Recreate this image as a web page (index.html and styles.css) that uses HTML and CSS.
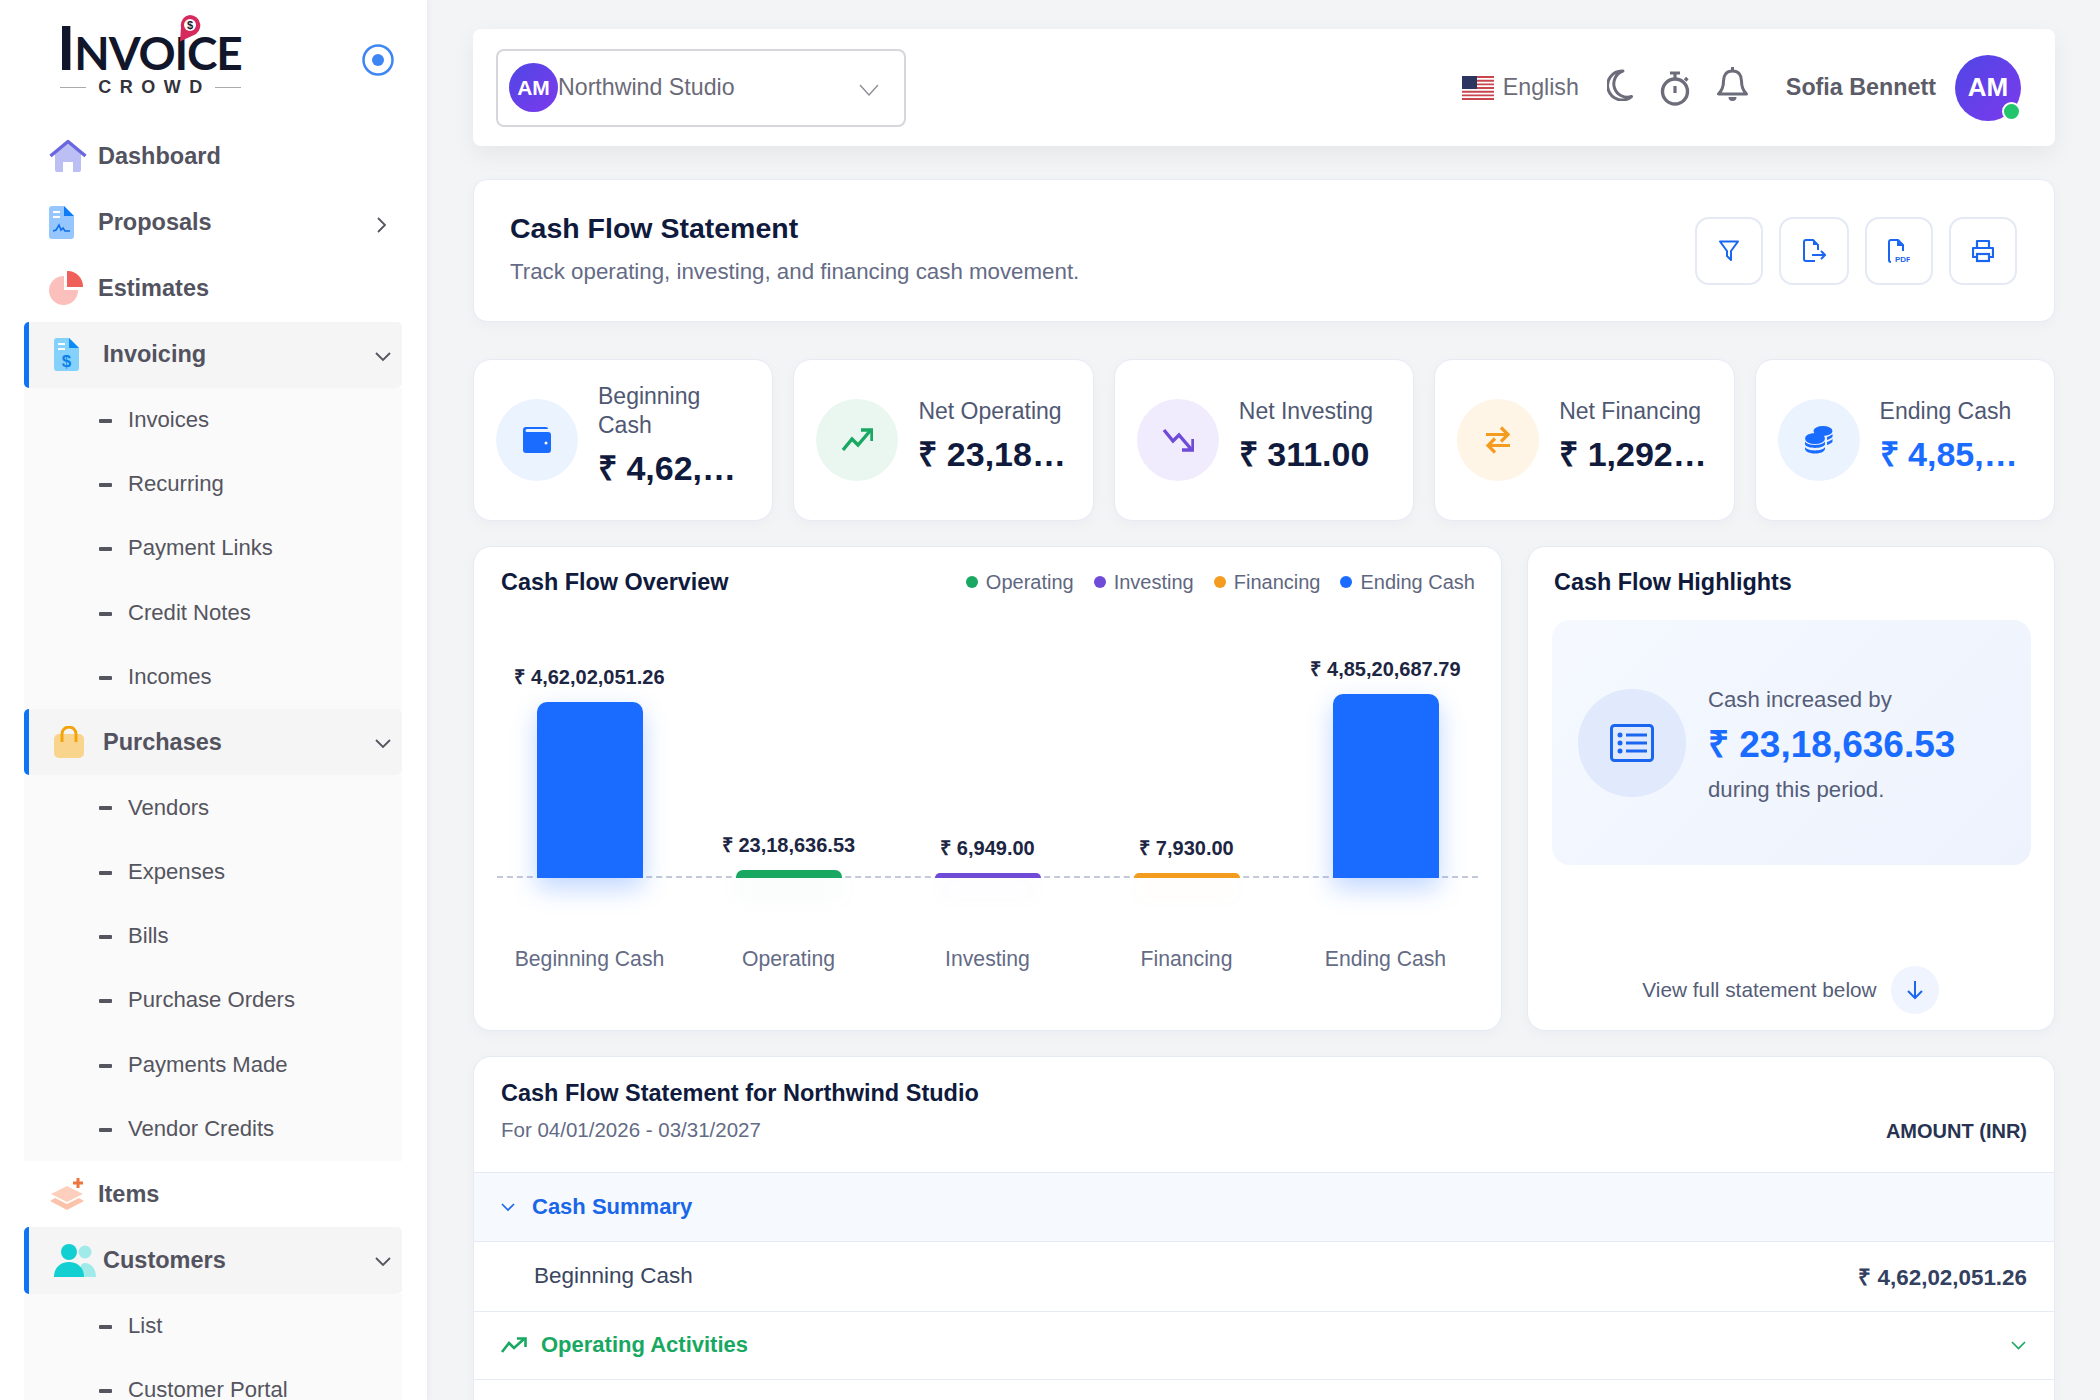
FILE: index.html
```html
<!DOCTYPE html>
<html lang="en">
<head>
    <meta charset="UTF-8">
    <meta name="viewport" content="width=device-width, initial-scale=1.0">
    <title>Cash Flow Statement</title>
    <link rel="stylesheet" href="styles.css">
</head>
<body>
    <div class="app">
        <!-- Sidebar -->
        <aside class="sidebar">
            <div class="brand">
                <div class="logo">
                    <div class="logo-word"><span class="logo-big">I</span>NVOICE</div>
                    <div class="logo-sub"><span class="logo-line"></span><span class="logo-crowd">CROWD</span><span class="logo-line"></span></div>
                    <svg class="logo-pin" viewBox="0 0 24 28" width="24" height="28">
                        <path d="M13 1a10.500 10.500 0 0 1 3 20.500L3 27.500l1-14A10.500 10.500 0 0 1 13 1z" fill="#d62a5e"/>
                        <circle cx="13" cy="11" r="6" fill="#fff"/>
                        <text x="13" y="15" text-anchor="middle" font-size="11" font-weight="700" fill="#1a1a2a" font-family="Liberation Sans">$</text>
                    </svg>
                </div>
                <svg class="brand-toggle" viewBox="0 0 32 32" width="32" height="32">
                    <circle cx="16" cy="16" r="14.500" fill="none" stroke="#3f86f5" stroke-width="2.500"/>
                    <circle cx="16" cy="16" r="6" fill="#3f86f5"/>
                </svg>
            </div>

            <nav class="nav">
                <div class="nav-item">
                    <span class="nav-icon">
                        <svg viewBox="0 0 38 34" width="38" height="34">
                            <path d="M6 14L19 4l13 10v17a2 2 0 0 1-2 2h-6V23H14v10H8a2 2 0 0 1-2-2z" fill="#bcbff4"/>
                            <path d="M1.500 17L19 2.500 36.500 17" fill="none" stroke="#6a68de" stroke-width="3.500" stroke-linejoin="round"/>
                        </svg>
                    </span>
                    <span class="nav-text">Dashboard</span>
                </div>
                <div class="nav-item">
                    <span class="nav-icon">
                        <svg viewBox="0 0 25 33" width="25" height="33">
                            <path d="M3 0h12l10 10v20a3 3 0 0 1-3 3H3a3 3 0 0 1-3-3V3a3 3 0 0 1 3-3z" fill="#95c6fd"/>
                            <path d="M15 0l10 10H15z" fill="#0d7bf5"/>
                            <path d="M4 6h7M4 11h7" stroke="#fff" stroke-width="2"/>
                            <path d="M4 25l3-1 3-5 2 5 2-2 2 3 5 0" fill="none" stroke="#0d6fe8" stroke-width="1.600"/>
                        </svg>
                    </span>
                    <span class="nav-text">Proposals</span>
                    <svg class="nav-arrow arrow-right" viewBox="0 0 10 16" width="10" height="16"><path d="M1 1l7 7-7 7" fill="none" stroke="#55555f" stroke-width="1.800"/></svg>
                </div>
                <div class="nav-item">
                    <span class="nav-icon">
                        <svg viewBox="0 0 34 34" width="34" height="34">
                            <path d="M15 5v14h14a14.500 14.500 0 1 1-14-14z" fill="#fbc0bb"/>
                            <path d="M18 0a15.500 15.500 0 0 1 16 16H18z" fill="#f0605a"/>
                        </svg>
                    </span>
                    <span class="nav-text">Estimates</span>
                </div>

                <div class="nav-item active">
                    <span class="nav-icon">
                        <svg viewBox="0 0 25 33" width="25" height="33">
                            <path d="M3 0h12l10 10v20a3 3 0 0 1-3 3H3a3 3 0 0 1-3-3V3a3 3 0 0 1 3-3z" fill="#84d2fb"/>
                            <path d="M15 0l10 10H15z" fill="#0d8bf5"/>
                            <path d="M4 6h7M4 11h7" stroke="#fff" stroke-width="2"/>
                            <text x="12.500" y="29" text-anchor="middle" font-size="17" fill="#0d7fe8" font-family="Liberation Sans">$</text>
                        </svg>
                    </span>
                    <span class="nav-text">Invoicing</span>
                    <svg class="nav-arrow" viewBox="0 0 16 10" width="16" height="10"><path d="M1 1l7 7 7-7" fill="none" stroke="#55555f" stroke-width="1.800"/></svg>
                </div>
                <div class="sub-list">
                    <div class="sub-item">Invoices</div>
                    <div class="sub-item">Recurring</div>
                    <div class="sub-item">Payment Links</div>
                    <div class="sub-item">Credit Notes</div>
                    <div class="sub-item">Incomes</div>
                </div>

                <div class="nav-item active">
                    <span class="nav-icon">
                        <svg viewBox="0 0 30 32" width="30" height="32">
                            <rect x="0" y="8" width="30" height="24" rx="5" fill="#f9d48c"/>
                            <path d="M8 16V8a7 7 0 0 1 14 0v8" fill="none" stroke="#f5a30b" stroke-width="3"/>
                        </svg>
                    </span>
                    <span class="nav-text">Purchases</span>
                    <svg class="nav-arrow" viewBox="0 0 16 10" width="16" height="10"><path d="M1 1l7 7 7-7" fill="none" stroke="#55555f" stroke-width="1.800"/></svg>
                </div>
                <div class="sub-list">
                    <div class="sub-item">Vendors</div>
                    <div class="sub-item">Expenses</div>
                    <div class="sub-item">Bills</div>
                    <div class="sub-item">Purchase Orders</div>
                    <div class="sub-item">Payments Made</div>
                    <div class="sub-item">Vendor Credits</div>
                </div>

                <div class="nav-item">
                    <span class="nav-icon">
                        <svg viewBox="0 0 36 34" width="36" height="34">
                            <path d="M18 9l16 8-16 8-16-8z" fill="#fdcfbc"/>
                            <path d="M6 21l12 6 12-6 5 3-17 9-17-9z" fill="#fcc3ab"/>
                            <path d="M29 1v10M24 6h10" stroke="#f0743e" stroke-width="3"/>
                        </svg>
                    </span>
                    <span class="nav-text">Items</span>
                </div>

                <div class="nav-item active">
                    <span class="nav-icon">
                        <svg viewBox="0 0 42 34" width="42" height="34">
                            <circle cx="31" cy="9" r="6.500" fill="#a0eaea"/>
                            <path d="M26 34c0-8 0-13 4-14 6-1 12 5 12 14z" fill="#a0eaea"/>
                            <circle cx="15" cy="9" r="8" fill="#12cfd1"/>
                            <path d="M0 34c0-9 6-15 15-15s15 6 15 15z" fill="#12cfd1"/>
                        </svg>
                    </span>
                    <span class="nav-text">Customers</span>
                    <svg class="nav-arrow" viewBox="0 0 16 10" width="16" height="10"><path d="M1 1l7 7 7-7" fill="none" stroke="#55555f" stroke-width="1.800"/></svg>
                </div>
                <div class="sub-list">
                    <div class="sub-item">List</div>
                    <div class="sub-item">Customer Portal</div>
                </div>
            </nav>
        </aside>

        <!-- Main content -->
        <main class="main">
            <header class="topbar">
                <div class="company-select">
                    <span class="avatar avatar-small">AM</span>
                    <span class="company-name">Northwind Studio</span>
                    <svg class="company-arrow" viewBox="0 0 20 12" width="20" height="12"><path d="M1 1l9 10 9-10" fill="none" stroke="#8a8a94" stroke-width="1.300"/></svg>
                </div>
                <div class="topbar-right">
                    <svg class="flag" viewBox="0 0 32 24" width="32" height="24">
                        <rect width="32" height="24" fill="#fff"/>
                        <path d="M0 1h32M0 4.700h32M0 8.400h32M0 12h32M0 15.700h32M0 19.400h32M0 23h32" stroke="#c8474f" stroke-width="1.900"/>
                        <rect width="15" height="13" fill="#2c3560"/>
                    </svg>
                    <span class="lang">English</span>
                    <svg class="top-icon moon" viewBox="0 0 26 32" width="26" height="32"><path d="M24.500 27.500A14.500 14.500 0 1 1 16 2 A13 13 0 0 0 24.500 27.500z" fill="none" stroke="#6c6c7a" stroke-width="3" stroke-linejoin="round"/></svg>
                    <svg class="top-icon timer" viewBox="0 0 30 35" width="30" height="35">
                        <circle cx="15" cy="20.500" r="12.500" fill="none" stroke="#6c6c7a" stroke-width="3.400"/>
                        <path d="M15 15v7M10 2h10M15 2v6M25 7l2.500 2.500" fill="none" stroke="#6c6c7a" stroke-width="3.200"/>
                    </svg>
                    <svg class="top-icon bell" viewBox="0 0 31 36" width="31" height="36">
                        <path d="M15.500 4c-6 0-9 4-9 10 0 7-2 10-5 13h28c-3-3-5-6-5-13 0-6-3-10-9-10z" fill="none" stroke="#6c6c7a" stroke-width="3" stroke-linejoin="round"/>
                        <path d="M15.500 0v4" stroke="#6c6c7a" stroke-width="3"/>
                        <path d="M11.500 30a4 4 0 0 0 8 0z" fill="#6c6c7a"/>
                    </svg>
                    <span class="user-name">Sofia Bennett</span>
                    <span class="avatar avatar-large">AM<span class="online-dot"></span></span>
                </div>
            </header>

            <section class="card page-head">
                <div class="head-text">
                    <h1>Cash Flow Statement</h1>
                    <p>Track operating, investing, and financing cash movement.</p>
                </div>
                <div class="head-actions">
                    <button class="icon-btn">
                        <svg viewBox="0 0 20 22" width="20" height="22"><path d="M1 1.500h18L12 11v9l-4-4v-5z" fill="none" stroke="#1a66f0" stroke-width="2" stroke-linejoin="round"/></svg>
                    </button>
                    <button class="icon-btn icon-btn-wide">
                        <svg viewBox="0 0 24 24" width="24" height="24"><path d="M13 22H4a2 2 0 0 1-2-2V3a2 2 0 0 1 2-2h7l5 5v5" fill="none" stroke="#1a66f0" stroke-width="2" stroke-linejoin="round"/><path d="M11 1v5h5" fill="#1a66f0"/><path d="M10 16h13M19 12l4 4-4 4" fill="none" stroke="#1a66f0" stroke-width="2"/></svg>
                    </button>
                    <button class="icon-btn">
                        <svg viewBox="0 0 22 24" width="22" height="24"><path d="M3 23a2 2 0 0 1-2-2V3a2 2 0 0 1 2-2h7l5 5v6" fill="none" stroke="#1a66f0" stroke-width="2" stroke-linejoin="round"/><path d="M9 1v6h6" fill="#1a66f0"/><text x="7" y="23" font-size="8" font-weight="700" fill="#1a66f0" font-family="Liberation Sans">PDF</text></svg>
                    </button>
                    <button class="icon-btn">
                        <svg viewBox="0 0 22 24" width="22" height="24"><path d="M5 8V2h12v6M5 18H1V9h20v9h-4" fill="none" stroke="#1a66f0" stroke-width="2.200" stroke-linejoin="round"/><rect x="5" y="15" width="12" height="7" fill="none" stroke="#1a66f0" stroke-width="2.200"/></svg>
                    </button>
                </div>
            </section>

            <section class="kpi-row">
                <div class="card kpi">
                    <span class="kpi-icon bg-blue">
                        <svg viewBox="0 0 28 26" width="28" height="26"><path d="M3 0h20a2 2 0 0 1 2 2H4a1.500 1.500 0 0 0 0 3h21a3 3 0 0 1 3 3v15a3 3 0 0 1-3 3H3a3 3 0 0 1-3-3V3a3 3 0 0 1 3-3z" fill="#1a6bff"/><circle cx="23" cy="16" r="1.500" fill="#fff"/></svg>
                    </span>
                    <div class="kpi-body">
                        <div class="kpi-label">Beginning Cash</div>
                        <div class="kpi-value">₹ 4,62,02,051.26</div>
                    </div>
                </div>
                <div class="card kpi">
                    <span class="kpi-icon bg-green">
                        <svg viewBox="0 0 32 24" width="32" height="24"><path d="M2 22l9-11 6 6L29 3" fill="none" stroke="#18a862" stroke-width="3.400"/><path d="M20 2h11v11" fill="none" stroke="#18a862" stroke-width="3.400"/></svg>
                    </span>
                    <div class="kpi-body">
                        <div class="kpi-label">Net Operating</div>
                        <div class="kpi-value">₹ 23,18,636.53</div>
                    </div>
                </div>
                <div class="card kpi">
                    <span class="kpi-icon bg-purple">
                        <svg viewBox="0 0 32 24" width="32" height="24"><path d="M2 2l9 11 6-6 12 14" fill="none" stroke="#6f4bd8" stroke-width="3.400"/><path d="M31 11v11H20" fill="none" stroke="#6f4bd8" stroke-width="3.400"/></svg>
                    </span>
                    <div class="kpi-body">
                        <div class="kpi-label">Net Investing</div>
                        <div class="kpi-value">₹ 311.00</div>
                    </div>
                </div>
                <div class="card kpi">
                    <span class="kpi-icon bg-orange">
                        <svg viewBox="0 0 26 28" width="26" height="28"><path d="M1 8.500h22M16 1.500l7 7-7 7" fill="none" stroke="#f39c1f" stroke-width="3.200"/><path d="M25 19.500H3M10 12.500l-7 7 7 7" fill="none" stroke="#f39c1f" stroke-width="3.200"/></svg>
                    </span>
                    <div class="kpi-body">
                        <div class="kpi-label">Net Financing</div>
                        <div class="kpi-value">₹ 1,292,419.00</div>
                    </div>
                </div>
                <div class="card kpi">
                    <span class="kpi-icon bg-blue">
                        <svg viewBox="0 0 28 28" width="28" height="28">
                            <ellipse cx="18" cy="5" rx="9.500" ry="5" fill="#1a6bff"/>
                            <path d="M22 11c2-.6 4-1.600 5.500-3v3c-1.500 1.400-3.500 2.500-5.500 3zM22 16c2-.6 4-1.600 5.500-3v3c-1.500 1.400-3.500 2.500-5.500 3z" fill="#1a6bff"/>
                            <ellipse cx="10" cy="12.500" rx="10" ry="5.500" fill="#1a6bff"/>
                            <path d="M0 15.500c2 4.500 18 4.500 20 0v3c-2 4.500-18 4.500-20 0zM0 21c2 4.500 18 4.500 20 0v2c-1 6-19 6-20 0z" fill="#1a6bff"/>
                        </svg>
                    </span>
                    <div class="kpi-body">
                        <div class="kpi-label">Ending Cash</div>
                        <div class="kpi-value text-blue">₹ 4,85,20,687.79</div>
                    </div>
                </div>
            </section>

            <section class="chart-row">
                <div class="card overview">
                    <div class="overview-head">
                        <h2>Cash Flow Overview</h2>
                        <div class="legend">
                            <span class="legend-item"><i class="dot green"></i>Operating</span>
                            <span class="legend-item"><i class="dot purple"></i>Investing</span>
                            <span class="legend-item"><i class="dot orange"></i>Financing</span>
                            <span class="legend-item"><i class="dot blue"></i>Ending Cash</span>
                        </div>
                    </div>
                    <div class="plot">
                        <div class="baseline"></div>
                        <div class="plot-col"><span class="bar-value">₹ 4,62,02,051.26</span><div class="bar blue tall" style="height: 176px"></div></div>
                        <div class="plot-col"><span class="bar-value">₹ 23,18,636.53</span><div class="bar green short" style="height: 8px"></div></div>
                        <div class="plot-col"><span class="bar-value">₹ 6,949.00</span><div class="bar purple short" style="height: 5px"></div></div>
                        <div class="plot-col"><span class="bar-value">₹ 7,930.00</span><div class="bar orange short" style="height: 5px"></div></div>
                        <div class="plot-col"><span class="bar-value">₹ 4,85,20,687.79</span><div class="bar blue tall" style="height: 184px"></div></div>
                    </div>
                    <div class="plot-labels">
                        <span>Beginning Cash</span>
                        <span>Operating</span>
                        <span>Investing</span>
                        <span>Financing</span>
                        <span>Ending Cash</span>
                    </div>
                </div>

                <div class="card highlights">
                    <h2>Cash Flow Highlights</h2>
                    <div class="highlight-panel">
                        <span class="highlight-icon">
                            <svg viewBox="0 0 44 38" width="44" height="38"><rect x="1.500" y="1.500" width="41" height="35" rx="3" fill="none" stroke="#1a66f0" stroke-width="3"/><circle cx="10" cy="11" r="2.500" fill="#1a66f0"/><circle cx="10" cy="19" r="2.500" fill="#1a66f0"/><circle cx="10" cy="27" r="2.500" fill="#1a66f0"/><path d="M16 11h21M16 19h21M16 27h21" stroke="#1a66f0" stroke-width="3"/></svg>
                        </span>
                        <div class="highlight-body">
                            <div class="highlight-text">Cash increased by</div>
                            <div class="highlight-value">₹ 23,18,636.53</div>
                            <div class="highlight-text">during this period.</div>
                        </div>
                    </div>
                    <div class="highlight-foot">
                        <span>View full statement below</span>
                        <span class="down-btn">
                            <svg viewBox="0 0 18 20" width="18" height="20"><path d="M9 1v17M2 11l7 7 7-7" fill="none" stroke="#1a66f0" stroke-width="2"/></svg>
                        </span>
                    </div>
                </div>
            </section>

            <section class="card statement">
                <div class="statement-head">
                    <div>
                        <h3>Cash Flow Statement for Northwind Studio</h3>
                        <p>For 04/01/2026 - 03/31/2027</p>
                    </div>
                    <span class="amount-head">AMOUNT (INR)</span>
                </div>
                <div class="st-row st-summary">
                    <svg viewBox="0 0 14 9" width="14" height="9"><path d="M1 1l6 6 6-6" fill="none" stroke="#1a66f0" stroke-width="1.600"/></svg>
                    <span>Cash Summary</span>
                </div>
                <div class="st-row st-line">
                    <span>Beginning Cash</span>
                    <span class="st-amount">₹ 4,62,02,051.26</span>
                </div>
                <div class="st-row st-operating">
                    <svg viewBox="0 0 26 16" width="26" height="16"><path d="M1 15l7-9 5 5 10-9" fill="none" stroke="#18a862" stroke-width="2.600"/><path d="M16 1.500h8.500V10" fill="none" stroke="#18a862" stroke-width="2.600"/></svg>
                    <span>Operating Activities</span>
                    <svg class="st-arrow" viewBox="0 0 15 9" width="15" height="9"><path d="M1 1l6.500 6.500L14 1" fill="none" stroke="#18a862" stroke-width="1.600"/></svg>
                </div>
            </section>
        </main>
    </div>
</body>
</html>
```

FILE: styles.css
```css
* {
    box-sizing: border-box;
    margin: 0;
    padding: 0;
}

html, body {
    height: 1400px;
    overflow: hidden;
}

body {
    font-family: "Liberation Sans", Arial, sans-serif;
    background-color: #f3f4f6;
    color: #0f1a3c;
}

.app {
    display: flex;
    height: 1400px;
    overflow: hidden;
}

/* Sidebar */
.sidebar {
    width: 427px;
    flex-shrink: 0;
    background-color: #fff;
    box-shadow: 2px 0 4px rgba(0, 0, 0, 0.04);
    overflow: hidden;
}

.brand {
    display: flex;
    align-items: flex-start;
    justify-content: space-between;
    height: 123px;
    padding: 24px 33px 0 57px;
}

.brand-toggle {
    margin-top: 20px;
}

.logo {
    position: relative;
    width: 184px;
}

.logo-word {
    font-family: Lato, "Liberation Sans", sans-serif;
    font-weight: 700;
    font-size: 46px;
    line-height: 44px;
    letter-spacing: -1.100px;
    color: #11162b;
    white-space: nowrap;
}

.logo-big {
    font-size: 62px;
}

.logo-sub {
    display: flex;
    align-items: center;
    justify-content: space-between;
    margin: 3px 0 0 3px;
}

.logo-line {
    width: 26px;
    height: 1px;
    background-color: #aaa;
}

.logo-crowd {
    font-size: 18px;
    line-height: 18px;
    font-weight: 700;
    letter-spacing: 8.500px;
    margin-right: -8px;
    color: #33333b;
}

.logo-pin {
    position: absolute;
    top: -10px;
    left: 120px;
}

.nav-item {
    display: flex;
    align-items: center;
    height: 66.200px;
    margin: 0 25px 0 24px;
    padding-left: 20px;
    border-left: 5px solid transparent;
    border-radius: 5px;
    color: #53535f;
    font-size: 23.500px;
    font-weight: 700;
}

.nav-item.active {
    padding-left: 25px;
    border-left-color: #0d74f5;
    background-color: #f5f5f6;
}

.nav-icon {
    display: flex;
    align-items: center;
    width: 49px;
    flex-shrink: 0;
}

.nav-arrow {
    margin-left: auto;
    margin-right: 11px;
    margin-top: 4px;
}

.arrow-right {
    margin-right: 15px;
    margin-top: 6px;
}

.sub-list {
    margin: 0 25px 0 24px;
    background-color: #fafafa;
}

.sub-item {
    display: flex;
    align-items: center;
    height: 64.300px;
    padding-left: 104px;
    font-size: 22.100px;
    color: #55555f;
    position: relative;
}

.sub-item::before {
    content: "";
    position: absolute;
    left: 75px;
    top: 31px;
    width: 13px;
    height: 4px;
    border-radius: 1px;
    background-color: #55555f;
}

/* Main area */
.main {
    flex: 1;
    min-width: 0;
    padding: 29px 45px 0 46px;
}

.card {
    background-color: #fff;
    border: 1px solid #e6eaf4;
    border-radius: 14px;
    box-shadow: 0 4px 14px rgba(15, 26, 60, 0.03);
}

.topbar {
    display: flex;
    align-items: center;
    justify-content: space-between;
    height: 117px;
    padding: 0 34px 0 23px;
    background-color: #fff;
    border-radius: 8px;
    box-shadow: 0 8px 24px rgba(0, 0, 0, 0.06);
    margin-bottom: 33px;
}

.company-select {
    display: flex;
    align-items: center;
    width: 410px;
    height: 78px;
    padding: 0 25px 0 11px;
    border: 2px solid #d6d7dc;
    border-radius: 8px;
}

.avatar {
    display: flex;
    align-items: center;
    justify-content: center;
    flex-shrink: 0;
    border-radius: 50%;
    background: linear-gradient(135deg, #4f46e5, #7c3aed);
    color: #fff;
    font-weight: 700;
}

.avatar-small {
    width: 49px;
    height: 49px;
    font-size: 21px;
}

.avatar-large {
    position: relative;
    width: 66px;
    height: 66px;
    font-size: 26px;
}

.online-dot {
    position: absolute;
    right: 0;
    bottom: 0;
    width: 19px;
    height: 19px;
    border-radius: 50%;
    background-color: #22c56b;
    border: 2px solid #fff;
}

.company-name {
    font-size: 23.200px;
    color: #6b6b78;
}

.company-arrow {
    margin-left: auto;
    margin-top: 4px;
}

.topbar-right {
    display: flex;
    align-items: center;
}

.flag {
    margin-right: 9px;
}

.lang {
    font-size: 23.200px;
    color: #6b6b78;
    margin-right: 28px;
}

.top-icon {
    margin-right: 27px;
}

.moon {
    margin-top: -6px;
}

.timer {
    margin-top: 2px;
}

.bell {
    margin-right: 38px;
    margin-top: -6px;
}

.user-name {
    font-size: 23.300px;
    font-weight: 700;
    color: #5c5c68;
    margin-right: 19px;
}

.page-head {
    display: flex;
    align-items: center;
    justify-content: space-between;
    height: 143px;
    padding: 0 37px 0 36px;
    margin-bottom: 37px;
}

.head-text {
    padding-bottom: 4px;
}

.page-head h1 {
    font-size: 28.500px;
    line-height: 34px;
    color: #0f1a3c;
    margin-bottom: 12px;
}

.page-head p {
    font-size: 22.300px;
    line-height: 30px;
    color: #646b85;
}

.head-actions {
    display: flex;
    gap: 16px;
}

.icon-btn {
    display: flex;
    align-items: center;
    justify-content: center;
    width: 68px;
    height: 68px;
    background-color: #fff;
    border: 2px solid #e4e9f5;
    border-radius: 14px;
}

.icon-btn-wide {
    width: 70px;
}

/* KPI cards */
.kpi-row {
    display: grid;
    grid-template-columns: repeat(5, minmax(0, 1fr));
    gap: 20px;
    margin-bottom: 25px;
}

.kpi {
    display: flex;
    align-items: center;
    gap: 20px;
    height: 162px;
    padding: 0 21px 0 22px;
    border-radius: 18px;
}

.kpi-icon {
    display: flex;
    align-items: center;
    justify-content: center;
    width: 82px;
    height: 82px;
    flex-shrink: 0;
    border-radius: 50%;
}

.bg-blue { background-color: #ebf3ff; }
.bg-green { background-color: #e9f7f0; }
.bg-purple { background-color: #f1ecfd; }
.bg-orange { background-color: #fef5e7; }

.kpi-body {
    min-width: 0;
    flex: 1;
    padding-bottom: 10px;
}

.kpi-label {
    font-size: 23px;
    line-height: 29px;
    color: #4f5873;
    margin-bottom: 8px;
}

.kpi-value {
    font-size: 34px;
    line-height: 40px;
    font-weight: 700;
    color: #0f1a3c;
    white-space: nowrap;
    overflow: hidden;
    text-overflow: ellipsis;
}

.text-blue {
    color: #1a6bff;
}

/* Chart row */
.chart-row {
    display: grid;
    grid-template-columns: 1029px minmax(0, 1fr);
    gap: 25px;
    margin-bottom: 25px;
}

.overview {
    height: 485px;
    border-radius: 18px;
    padding: 22px 16px 0;
}

.overview-head {
    display: flex;
    align-items: center;
    justify-content: space-between;
    padding: 0 10px 0 11px;
    height: 26px;
}

h2 {
    font-size: 23.400px;
    line-height: 26px;
    font-weight: 700;
    color: #0f1a3c;
}

.legend {
    display: flex;
    gap: 20px;
    font-size: 20px;
    color: #5f6780;
}

.legend-item {
    display: flex;
    align-items: center;
}

.dot {
    width: 12px;
    height: 12px;
    border-radius: 50%;
    margin-right: 8px;
}

.green { background-color: #18a862; }
.purple { background-color: #6f4bd8; }
.orange { background-color: #f39c1f; }
.blue { background-color: #1a6bff; }

.plot {
    position: relative;
    display: grid;
    grid-template-columns: repeat(5, 1fr);
    align-items: end;
    height: 258px;
    margin-top: 25px;
}

.baseline {
    position: absolute;
    left: 7px;
    right: 7px;
    bottom: 0;
    border-top: 2px dashed #c3c9d8;
}

.plot-col {
    position: relative;
    display: flex;
    flex-direction: column;
    align-items: center;
}

.bar-value {
    font-size: 20px;
    line-height: 24px;
    font-weight: 700;
    color: #1c2542;
    margin-bottom: 13px;
}

.bar {
    width: 106px;
}

.bar.tall {
    border-radius: 10px 10px 0 0;
    box-shadow: 0 10px 26px rgba(26, 107, 255, 0.28);
}

.bar.short {
    border-radius: 7px 7px 0 0;
}

.bar.green { box-shadow: 0 14px 24px rgba(24, 168, 98, 0.1); }
.bar.purple { box-shadow: 0 14px 24px rgba(111, 75, 216, 0.07); }
.bar.orange { box-shadow: 0 14px 24px rgba(243, 156, 31, 0.07); }

.plot-labels {
    display: grid;
    grid-template-columns: repeat(5, 1fr);
    margin-top: 69px;
    font-size: 21.200px;
    line-height: 24px;
    text-align: center;
    color: #646b85;
}

.highlights {
    display: flex;
    flex-direction: column;
    height: 485px;
    border-radius: 18px;
    padding: 22px 23px 16px 26px;
}

.highlight-panel {
    display: flex;
    align-items: center;
    gap: 22px;
    height: 245px;
    margin-top: 25px;
    padding-left: 26px;
    margin-left: -2px;
    border-radius: 18px;
    background: linear-gradient(135deg, #f5f9ff, #edf2fd);
}

.highlight-icon {
    display: flex;
    align-items: center;
    justify-content: center;
    width: 108px;
    height: 108px;
    border-radius: 50%;
    background-color: #e0eafc;
}

.highlight-body {
    padding-top: 4px;
}

.highlight-text {
    font-size: 22.200px;
    line-height: 28px;
    color: #555d78;
}

.highlight-value {
    font-size: 37px;
    line-height: 44px;
    font-weight: 700;
    color: #1a6bff;
    margin: 9px 0;
}

.highlight-foot {
    display: flex;
    align-items: center;
    justify-content: center;
    gap: 14px;
    margin-top: auto;
    padding-right: 4px;
    font-size: 20.800px;
    color: #555d78;
}

.down-btn {
    display: flex;
    align-items: center;
    justify-content: center;
    width: 48px;
    height: 48px;
    border-radius: 50%;
    background-color: #eff4fe;
}

/* Statement table */
.statement {
    min-height: 420px;
    border-radius: 18px 18px 0 0;
}

.statement-head {
    display: flex;
    align-items: flex-end;
    justify-content: space-between;
    height: 115px;
    padding: 0 27px 30px;
}

.statement-head h3 {
    font-size: 23.500px;
    line-height: 28px;
    margin-bottom: 11px;
    color: #0f1a3c;
}

.statement-head p {
    font-size: 20.500px;
    line-height: 24px;
    color: #646b85;
}

.amount-head {
    font-size: 20px;
    line-height: 24px;
    font-weight: 700;
    color: #283352;
    margin-bottom: -1px;
}

.st-row {
    display: flex;
    align-items: center;
    height: 69.300px;
    padding: 0 27px;
    border-top: 1px solid #e6eaf4;
    font-size: 22px;
}

.st-summary {
    gap: 17px;
    background-color: #f6f9fe;
    font-weight: 700;
    color: #1a66e8;
}

.st-line {
    justify-content: space-between;
    padding-left: 60px;
    font-size: 22.500px;
    color: #3a4560;
}

.st-amount {
    font-size: 22.400px;
    font-weight: 700;
    color: #334060;
}

.st-operating {
    gap: 14px;
    font-weight: 700;
    color: #18a862;
    border-bottom: 1px solid #e6eaf4;
}

.st-arrow {
    margin-left: auto;
    margin-right: 1px;
}
```
